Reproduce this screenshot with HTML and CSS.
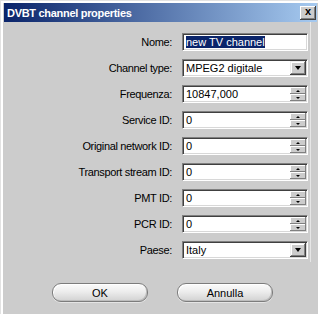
FILE: index.html
```html
<!DOCTYPE html>
<html lang="it">
<head>
    <meta charset="UTF-8">
    <title>DVBT channel properties</title>
    <link rel="stylesheet" href="styles.css">
</head>
<body>
    <div class="window">
        <div class="title-bar">
            <span class="title">DVBT channel properties</span>
            <span class="close-btn">x</span>
        </div>

        <div class="panel">
            <div class="form">
                <label>Nome:</label>
                <div class="field">
                    <span class="value"><span class="selected">new TV channel</span></span>
                </div>

                <label>Channel type:</label>
                <div class="field">
                    <span class="value">MPEG2 digitale</span>
                    <span class="drop-btn"><i class="tri-down"></i></span>
                </div>

                <label>Frequenza:</label>
                <div class="field">
                    <span class="value">10847,000</span>
                    <span class="spin"><span class="spin-btn"><i class="tri-up"></i></span><span class="spin-btn"><i class="tri-dn"></i></span></span>
                </div>

                <label>Service ID:</label>
                <div class="field">
                    <span class="value">0</span>
                    <span class="spin"><span class="spin-btn"><i class="tri-up"></i></span><span class="spin-btn"><i class="tri-dn"></i></span></span>
                </div>

                <label>Original network ID:</label>
                <div class="field">
                    <span class="value">0</span>
                    <span class="spin"><span class="spin-btn"><i class="tri-up"></i></span><span class="spin-btn"><i class="tri-dn"></i></span></span>
                </div>

                <label>Transport stream ID:</label>
                <div class="field">
                    <span class="value">0</span>
                    <span class="spin"><span class="spin-btn"><i class="tri-up"></i></span><span class="spin-btn"><i class="tri-dn"></i></span></span>
                </div>

                <label>PMT ID:</label>
                <div class="field">
                    <span class="value">0</span>
                    <span class="spin"><span class="spin-btn"><i class="tri-up"></i></span><span class="spin-btn"><i class="tri-dn"></i></span></span>
                </div>

                <label>PCR ID:</label>
                <div class="field">
                    <span class="value">0</span>
                    <span class="spin"><span class="spin-btn"><i class="tri-up"></i></span><span class="spin-btn"><i class="tri-dn"></i></span></span>
                </div>

                <label>Paese:</label>
                <div class="field">
                    <span class="value">Italy</span>
                    <span class="drop-btn"><i class="tri-down"></i></span>
                </div>
            </div>
        </div>

        <div class="buttons">
            <button>OK</button>
            <button>Annulla</button>
        </div>
    </div>
</body>
</html>
```

FILE: styles.css
```css
:root {
    --face: #cccccc;
    --shadow: #808080;
    --dark: #404040;
    --highlight: #0a246a;
}

html, body {
    margin: 0;
    height: 100%;
}

body {
    background: var(--face);
    font-family: "Liberation Sans", Arial, sans-serif;
    font-size: 11px;
    color: #000;
}

.window {
    height: 100%;
    box-sizing: border-box;
    padding: 3px 1px 0 4px;
    box-shadow: inset 1px 1px #e2e2e2, inset 3px 3px #fff;
}

.title-bar {
    height: 19px;
    display: flex;
    align-items: center;
    justify-content: space-between;
    padding: 0 1px 0 3px;
    background: linear-gradient(to right, #0a246a, #a6caf0);
}

.title {
    color: #fff;
    font-weight: bold;
    letter-spacing: -0.3px;
}

.close-btn {
    width: 16px;
    height: 14px;
    box-sizing: border-box;
    display: flex;
    align-items: center;
    justify-content: center;
    background: var(--face);
    font-weight: bold;
    font-size: 11px;
    line-height: 1;
    padding-bottom: 2px;
    box-shadow: inset -1px -1px var(--dark), inset 1px 1px #fff, inset -2px -2px var(--shadow);
}

.panel {
    width: 306px;
    padding: 11px 0 3px;
    border-right: 1px solid #e6e6e6;
}

.form {
    display: grid;
    grid-template-columns: 168px 126px;
    column-gap: 10px;
    row-gap: 8px;
}

.form label {
    text-align: right;
    line-height: 18px;
    letter-spacing: -0.35px;
}

.field {
    height: 18px;
    box-sizing: border-box;
    display: flex;
    background: #fff;
    border-top: 1px solid var(--shadow);
    border-left: 1px solid var(--shadow);
    border-right: 1px solid #fff;
    border-bottom: 1px solid #fff;
    box-shadow: inset 1px 1px var(--dark), inset -1px -1px #d8d8d8;
    padding: 1px;
}

.value {
    flex: 1;
    padding-left: 2px;
    line-height: 14px;
    white-space: nowrap;
    overflow: hidden;
}

.selected {
    background: var(--highlight);
    color: #fff;
}

.drop-btn {
    width: 16px;
    height: 14px;
    box-sizing: border-box;
    display: flex;
    align-items: center;
    justify-content: center;
    background: var(--face);
    box-shadow: inset -1px -1px var(--dark), inset 1px 1px #eee, inset -2px -2px var(--shadow), inset 2px 2px #fff;
}

.tri-down {
    width: 0;
    height: 0;
    border-left: 3.5px solid transparent;
    border-right: 3.5px solid transparent;
    border-top: 4px solid #000;
}

.spin {
    width: 16px;
    display: flex;
    flex-direction: column;
}

.spin-btn {
    height: 7px;
    display: flex;
    align-items: center;
    justify-content: center;
    background: var(--face);
    box-shadow: inset -1px -1px var(--shadow), inset 1px 1px #fff;
}

.tri-up {
    width: 0;
    height: 0;
    border-left: 2px solid transparent;
    border-right: 2px solid transparent;
    border-bottom: 2px solid #000;
}

.tri-dn {
    width: 0;
    height: 0;
    border-left: 2px solid transparent;
    border-right: 2px solid transparent;
    border-top: 2px solid #000;
}

.buttons {
    display: flex;
    gap: 29px;
    padding-left: 48px;
    margin-top: 21px;
}

.buttons button {
    width: 96px;
    height: 19px;
    border: 1px solid #7c7c7c;
    border-radius: 9px;
    background: linear-gradient(#fbfbfb, #ededed 45%, #d2d2d2);
    box-shadow: inset 1px 1px #fff, inset -1px -1px #bdbdbd, 0 1px #e4e4e4;
    font-family: "Liberation Sans", Arial, sans-serif;
    font-size: 11px;
    color: #000;
    padding: 0;
}
```
